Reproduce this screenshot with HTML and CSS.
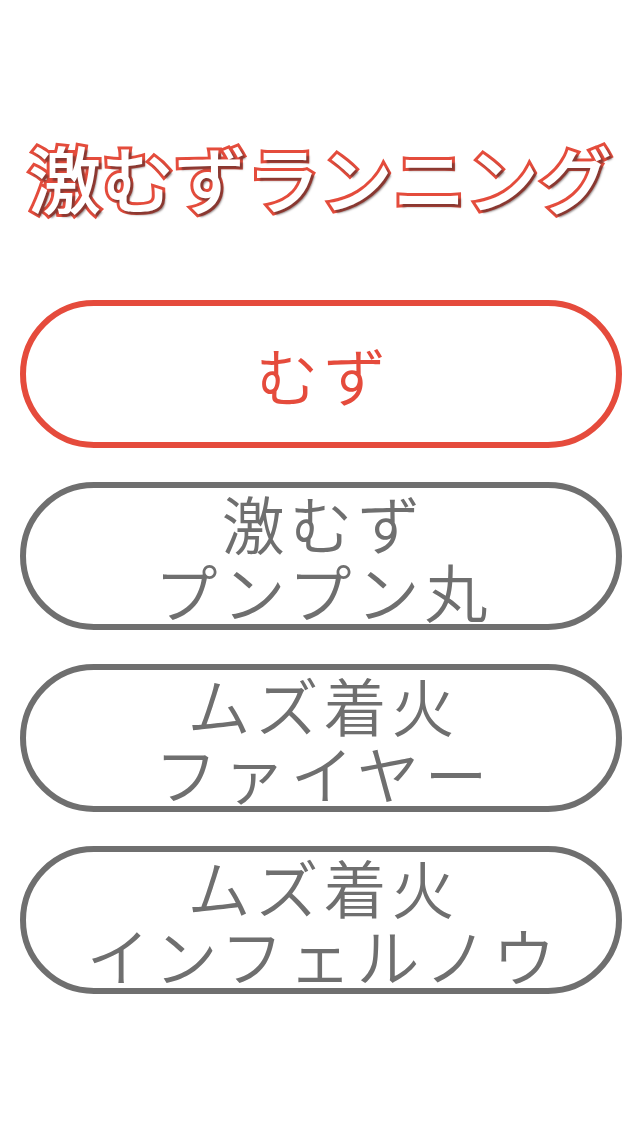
FILE: index.html
```html
<!DOCTYPE html>
<html lang="ja">
<head>
  <meta charset="UTF-8">
  <meta name="viewport" content="width=device-width, initial-scale=1.0">
  <title>激むずランニング</title>
  <link rel="stylesheet" href="styles.css">
</head>
<body>

  <div class="screen">
    <!-- Game title -->
    <div class="title">激むずランニング</div>

    <!-- Difficulty buttons -->
    <div class="menu">
      <button class="mode mode-active">むず</button>
      <button class="mode">激むず<br>プンプン丸</button>
      <button class="mode">ムズ着火<br>ファイヤー</button>
      <button class="mode">ムズ着火<br>インフェルノウ</button>
    </div>
  </div>

</body>
</html>
```

FILE: styles.css
```css
body {
  margin: 0;
  padding: 0;
  background-color: white;
  font-family: 'Noto Sans CJK JP', 'Noto Sans', sans-serif;
}
.screen {
  width: 640px;
  height: 1136px;
  padding-top: 134px;
  box-sizing: border-box;
}
.title {
  font-size: 73px;
  line-height: 84px;
  height: 84px;
  text-align: center;
  font-weight: 500;
  color: white;
  -webkit-text-stroke: 6px #e44c3c;
  paint-order: stroke fill;
  text-shadow: 3px 3px 2px rgba(60, 40, 40, 0.55);
}
.menu {
  display: flex;
  flex-direction: column;
  gap: 34px;
  margin-top: 82px;
  padding-left: 20px;
}
.mode {
  width: 602px;
  height: 148px;
  box-sizing: border-box;
  border: 6px solid #6f6f6f;
  border-radius: 74px;
  background-color: white;
  color: #6f6f6f;
  font-family: inherit;
  font-size: 63px;
  line-height: 68px;
  font-weight: 350;
  letter-spacing: 5px;
  padding: 0 0 0 5px;
  text-align: center;
}
.mode-active {
  border-color: #e54b3c;
  color: #e54b3c;
}
```
